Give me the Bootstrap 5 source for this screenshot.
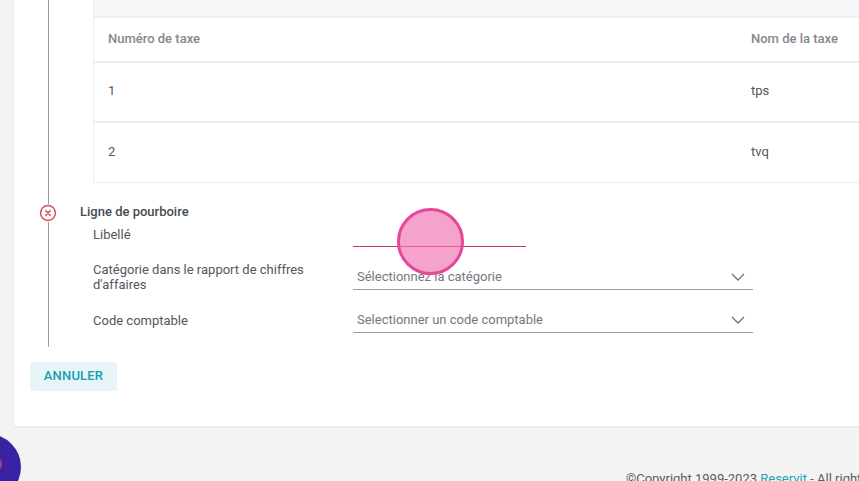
<!DOCTYPE html>
<html lang="fr">
<head>
<meta charset="utf-8">
<title>Ligne de pourboire</title>
<link href="https://cdn.jsdelivr.net/npm/bootstrap@5.3.0/dist/css/bootstrap.min.css" rel="stylesheet">
<style>
html,body{height:481px;overflow:hidden}
body{background:#f3f3f3;font-family:Roboto,"Liberation Sans",sans-serif;font-size:13px;color:#53565c;position:relative}
.sheet{margin-left:14px;width:900px;height:426px;background:#fff;box-shadow:0 1px 2px rgba(0,0,0,.06);padding-left:34px}
.rail{border-left:1px solid #9b9b9b;height:347px;position:relative;padding-left:44px}
.band{height:16px;background:#f6f7f9;border-left:1px solid #eee}
.tax-table{width:766px;table-layout:fixed;margin:0;border-left:1px solid #eee;border-top:2px solid #eee;border-collapse:separate;border-spacing:0}
.tax-table th,.tax-table td{padding:0 0 0 14px;vertical-align:middle;border-bottom:2px solid #eee;background:#fff;color:#53565c;font-size:13px}
.tax-table th{height:45px;padding-bottom:2px;color:#85878b;font-weight:500;font-size:13px}
.tax-table td{height:60px;padding-bottom:2px}
.tax-table tr:last-child td{height:60px;border-bottom-width:1px}
.tax-table .col-a{width:643px}
.tip-title{margin:21px 0 0 -13px;font-weight:500;font-size:13px;line-height:15px;color:#484b52}
.status{position:absolute;left:-10px;top:204px;width:18px;height:18px;background:#fff;border-radius:50%}
.field-row{width:660px}
.row-libelle{margin-top:8px}
.row-cat{margin-top:15px}
.row-code{margin-top:15px}
.lab{width:260px;flex:none;font-size:13px;line-height:15px;padding-right:20px}
.libelle-line{width:173px;margin-top:19px;border-bottom:1px solid #c43a4f;height:1px}
.pick{width:400px;border-bottom:1px solid #9b9b9b;padding:0 8px 0 4px;height:26px;color:#75787d;font-size:13px}
.pick-first{margin-top:2px}
.btn-annuler{margin-top:15px;margin-left:-18px;width:87px;height:29px;padding:0 0 2px;background:#e6f6f8;border:0;border-radius:3px;color:#1a9cae;font-weight:500;font-size:13px;letter-spacing:.2px;line-height:27px}
.touch{position:absolute;left:397px;top:208px;width:67px;height:67px;border-radius:50%;background:rgba(240,120,180,.68);border:3px solid #e4479b}
.bubble{position:absolute;left:-45px;top:434px;width:66px;height:66px;border-radius:50%;background:#3b22a3;overflow:hidden}
.bubble-dot{position:absolute;left:25px;top:21px;width:22px;height:18px;border-radius:50%;background:#a2457f}
.legal{position:absolute;left:626px;top:471px;white-space:nowrap;font-size:13px;line-height:15px;color:#5a5d62}
.legal a{color:#26a5b3;text-decoration:none}
</style>
</head>
<body>
<div class="sheet">
  <div class="rail">
    <div class="band"></div>
    <table class="table tax-table">
      <thead><tr><th class="col-a">Numéro de taxe</th><th>Nom de la taxe</th></tr></thead>
      <tbody>
        <tr><td>1</td><td>tps</td></tr>
        <tr><td>2</td><td>tvq</td></tr>
      </tbody>
    </table>
    <span class="status">
      <svg width="18" height="18" viewBox="0 0 18 18" fill="none" class="d-block"><circle cx="9" cy="9" r="7.4" stroke="#d2505c" stroke-width="1.5"/><path d="M6.9 6.9l4.2 4.2M11.1 6.9l-4.2 4.2" stroke="#d2505c" stroke-width="1.5" stroke-linecap="round"/></svg>
    </span>
    <div class="tip-title">Ligne de pourboire</div>
    <div class="d-flex field-row align-items-start row-libelle">
      <div class="lab">Libellé</div>
      <div class="libelle-line"></div>
    </div>
    <div class="d-flex field-row align-items-start row-cat">
      <div class="lab">Catégorie dans le rapport de chiffres d'affaires</div>
      <div class="pick pick-first d-flex align-items-center justify-content-between"><span>Sélectionnez la catégorie</span>
        <svg width="14" height="8" viewBox="0 0 14 8" fill="none"><path d="M1 1l6 6 6-6" stroke="#6f7276" stroke-width="1.3"/></svg></div>
    </div>
    <div class="d-flex field-row align-items-center row-code">
      <div class="lab">Code comptable</div>
      <div class="pick d-flex align-items-center justify-content-between"><span>Selectionner un code comptable</span>
        <svg width="14" height="8" viewBox="0 0 14 8" fill="none"><path d="M1 1l6 6 6-6" stroke="#6f7276" stroke-width="1.3"/></svg></div>
    </div>
  </div>
  <button type="button" class="btn btn-annuler">ANNULER</button>
</div>
<div class="touch"></div>
<div class="bubble"><span class="bubble-dot"></span></div>
<div class="legal">©Copyright 1999-2023 <a href="#">Reservit</a> - All rights reserved</div>
<script src="https://cdn.jsdelivr.net/npm/bootstrap@5.3.0/dist/js/bootstrap.bundle.min.js"></script>
</body>
</html>
